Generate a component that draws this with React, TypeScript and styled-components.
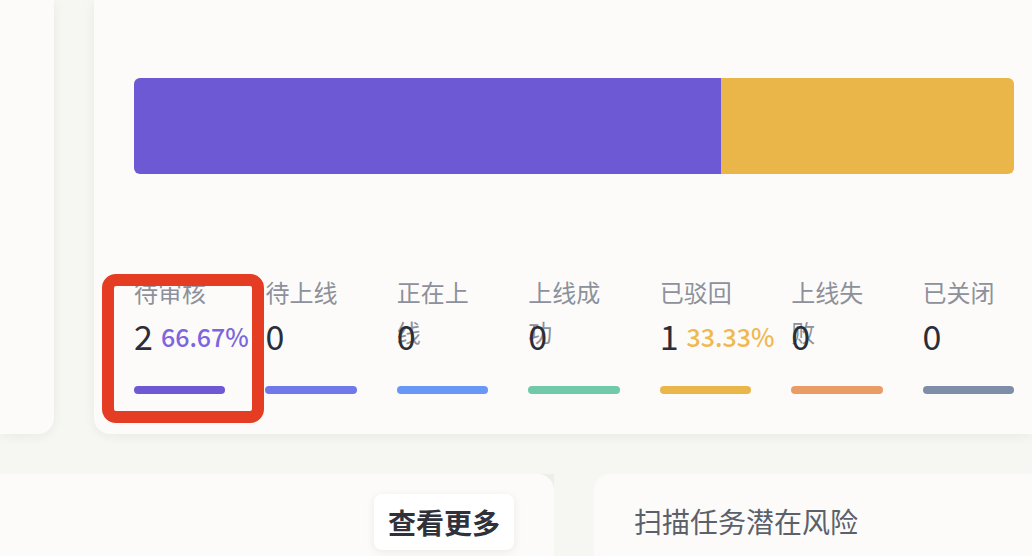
import React from "react";
import styled, { createGlobalStyle } from "styled-components";

const GlobalStyle = createGlobalStyle`
  * { box-sizing: border-box; }
  body {
    margin: 0;
    background: #f6f7f3;
    font-family: "Noto Sans CJK SC", sans-serif;
    color: #2b2d38;
  }
`;

const Page = styled.main`
  display: flex;
  flex-direction: column;
  gap: 40px;
  min-height: 100vh;
  overflow: hidden;
`;

const TopRow = styled.div`
  display: grid;
  grid-template-columns: 54px minmax(0, 1fr);
  gap: 40px;
`;

const BottomRow = styled.div`
  display: grid;
  grid-template-columns: minmax(0, 554fr) minmax(0, 438fr);
  gap: 40px;
  flex: 1;
`;

const Card = styled.section<{ $radius: string }>`
  background: #fcfbf9;
  border-radius: ${(p) => p.$radius};
  box-shadow: 0 2px 12px rgba(40, 40, 40, 0.06);
`;

const StatusCard = styled(Card)`
  padding: 78px 18px 40px 40px;
`;

const HeaderCard = styled(Card)<{ $align: string }>`
  display: flex;
  align-items: flex-start;
  justify-content: ${(p) => p.$align};
  padding: 20px 40px 6px;
  box-shadow: none;
`;

const CornerBacking = styled.div`
  display: flex;
  background: linear-gradient(#ededeb, #ededeb) top right / 16px 16px no-repeat;

  > * { flex: 1; }
`;

const StackedBar = styled.div`
  display: flex;
  height: 96px;
  border-radius: 6px;
  overflow: hidden;
`;

const Segment = styled.div<{ $share: number; $color: string }>`
  flex: ${(p) => p.$share} 1 0;
  background: ${(p) => p.$color};
`;

const StatList = styled.ul`
  display: grid;
  grid-template-columns: repeat(7, minmax(0, 1fr));
  gap: 40px;
  margin: 98px 0 0;
  padding: 0;
  list-style: none;
`;

const Stat = styled.li`
  position: relative;
`;

const Label = styled.div`
  height: 40px;
  font-size: 24px;
  line-height: 40px;
  color: #8c919b;
`;

const Figures = styled.div`
  position: relative;
  display: flex;
  align-items: center;
  gap: 8px;
  height: 48px;
  line-height: 48px;
  white-space: nowrap;
`;

const Count = styled.span`
  font-size: 34px;
`;

const Percent = styled.span<{ $color: string }>`
  font-size: 25px;
  font-weight: 500;
  color: ${(p) => p.$color};
`;

const Underline = styled.div<{ $color: string }>`
  height: 8px;
  margin-top: 26px;
  border-radius: 4px;
  background: ${(p) => p.$color};
`;

const Highlight = styled.div`
  position: absolute;
  inset: 2px -39px -29px -32px;
  border: 12px solid #e53c24;
  border-radius: 14px;
  pointer-events: none;
`;

const MoreButton = styled.button`
  height: 56px;
  padding: 0 14px;
  border: 0;
  border-radius: 8px;
  background: #ffffff;
  box-shadow: 0 2px 8px rgba(40, 40, 40, 0.08);
  font-family: inherit;
  font-size: 28px;
  font-weight: 700;
  line-height: 54px;
  color: #2f313b;
  cursor: pointer;
`;

const Title = styled.h2`
  margin: 0;
  font-size: 28px;
  font-weight: 400;
  line-height: 54px;
  color: #5b616b;
`;

interface Status {
  label: string;
  count: number;
  color: string;
  percent?: string;
  percentColor?: string;
  highlighted?: boolean;
}

const statuses: Status[] = [
  { label: "待审核", count: 2, color: "#6d59d4", percent: "66.67%", percentColor: "#7c66dc", highlighted: true },
  { label: "待上线", count: 0, color: "#7178e8" },
  { label: "正在上线", count: 0, color: "#6897f5" },
  { label: "上线成功", count: 0, color: "#70c9a8" },
  { label: "已驳回", count: 1, color: "#eab64a", percent: "33.33%", percentColor: "#efb94f" },
  { label: "上线失败", count: 0, color: "#ea9c66" },
  { label: "已关闭", count: 0, color: "#7e8da8" },
];

export default function App() {
  return (
    <>
      <GlobalStyle />
      <Page>
        <TopRow>
          <Card $radius="0 0 16px 0" />
          <StatusCard $radius="0 0 0 16px">
            <StackedBar>
              {statuses
                .filter((s) => s.count > 0)
                .map((s) => (
                  <Segment key={s.label} $share={s.count} $color={s.color} />
                ))}
            </StackedBar>
            <StatList>
              {statuses.map((s) => (
                <Stat key={s.label}>
                  <Label>{s.label}</Label>
                  <Figures>
                    <Count>{s.count}</Count>
                    {s.percent && <Percent $color={s.percentColor ?? s.color}>{s.percent}</Percent>}
                  </Figures>
                  <Underline $color={s.color} />
                  {s.highlighted && <Highlight />}
                </Stat>
              ))}
            </StatList>
          </StatusCard>
        </TopRow>
        <BottomRow>
          <CornerBacking>
            <HeaderCard $radius="0 16px 0 0" $align="flex-end">
              <MoreButton type="button">查看更多</MoreButton>
            </HeaderCard>
          </CornerBacking>
          <HeaderCard $radius="16px 0 0 0" $align="flex-start">
            <Title>扫描任务潜在风险</Title>
          </HeaderCard>
        </BottomRow>
      </Page>
    </>
  );
}
